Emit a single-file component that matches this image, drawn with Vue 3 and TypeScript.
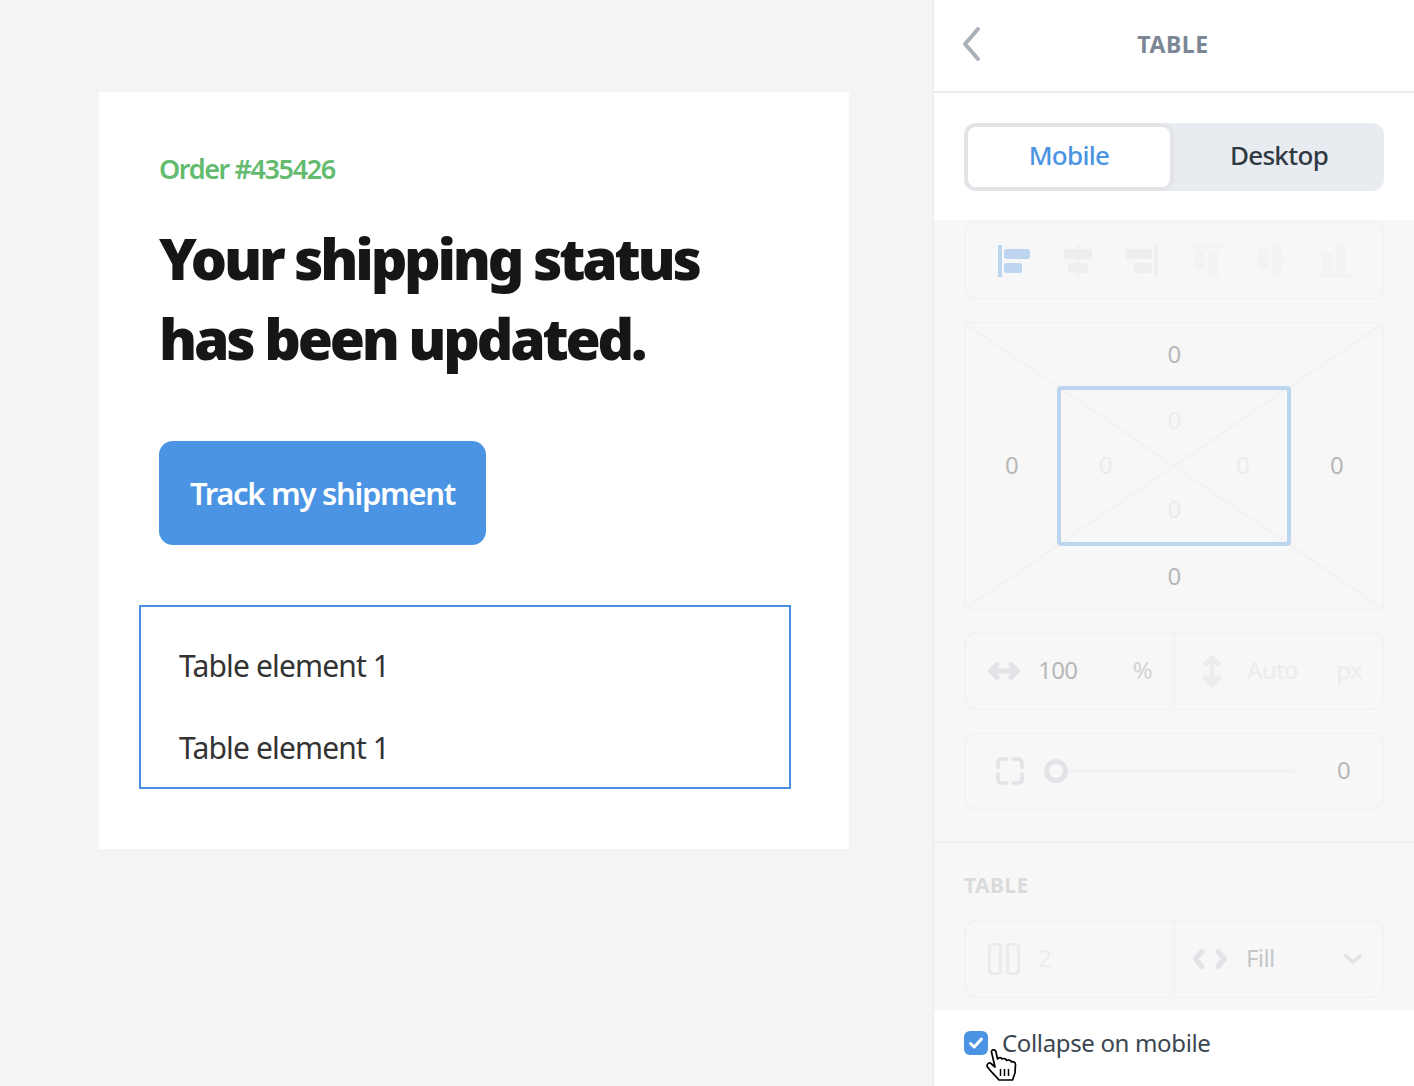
<script setup lang="ts">
const rowLabels: string[] = ['Table element 1', 'Table element 1']
</script>

<template>
  <div class="page">
    <main class="canvas">
      <section class="card">
        <div class="order">Order #435426</div>
        <h1 class="title">Your shipping status<br />has been updated.</h1>
        <a class="track">Track my shipment</a>
        <div class="table-sel">
          <div v-for="(r, i) in rowLabels" :key="i" class="tr">{{ r }}</div>
        </div>
      </section>
    </main>

    <aside class="panel">
      <header class="head">
        <svg class="back" width="20" height="36" viewBox="0 0 20 36"><path d="M16 3 L3 18 L16 33" fill="none" stroke="#aab1b9" stroke-width="4" stroke-linecap="round" stroke-linejoin="round" /></svg>
        <span class="head-title">TABLE</span>
      </header>

      <div class="tabs-wrap">
        <div class="tabs">
          <div class="tab active">Mobile</div>
          <div class="tab">Desktop</div>
        </div>
      </div>

      <div class="dim">
        <div class="box aligns">
          <svg width="32" height="32" viewBox="0 0 32 32" fill="#bdd5ee"><rect x="0" y="0" width="4" height="32" /><rect x="6" y="4" width="26" height="10" rx="2" /><rect x="6" y="18" width="18" height="10" rx="2" /></svg>
          <svg width="32" height="32" viewBox="0 0 32 32"><rect x="14" y="0" width="4" height="32" fill="#f3f3f4" /><rect x="2" y="4" width="28" height="10" rx="2" fill="#eeeeef" /><rect x="6" y="18" width="20" height="10" rx="2" fill="#eeeeef" /></svg>
          <svg width="32" height="32" viewBox="0 0 32 32" fill="#eeeeef"><rect x="28" y="0" width="4" height="32" /><rect x="0" y="4" width="26" height="10" rx="2" /><rect x="8" y="18" width="18" height="10" rx="2" /></svg>
          <svg width="32" height="32" viewBox="0 0 32 32" fill="#f2f3f3"><rect x="0" y="0" width="32" height="4" /><rect x="4" y="6" width="10" height="18" /><rect x="18" y="6" width="10" height="26" /></svg>
          <svg width="32" height="32" viewBox="0 0 32 32"><rect x="0" y="14" width="32" height="4" fill="#f4f5f5" /><rect x="4" y="4" width="10" height="20" fill="#f2f3f3" /><rect x="18" y="0" width="10" height="30" fill="#f2f3f3" /></svg>
          <svg width="32" height="32" viewBox="0 0 32 32" fill="#f2f3f3"><rect x="0" y="28" width="32" height="4" /><rect x="4" y="8" width="10" height="18" /><rect x="18" y="0" width="10" height="26" /></svg>
        </div>

        <div class="box spacing">
          <svg class="cross" width="416" height="284" viewBox="0 0 416 284"><path d="M0 0 L416 284 M416 0 L0 284" stroke="#f2f2f2" stroke-width="2" fill="none" /></svg>
          <span class="num top">0</span>
          <span class="num side">0</span>
          <div class="inner">
            <span class="faint in-top">0</span>
            <span class="faint in-left">0</span>
            <span class="faint in-right">0</span>
            <span class="faint in-bottom">0</span>
          </div>
          <span class="num side">0</span>
          <span class="num bottom">0</span>
        </div>

        <div class="box row">
          <div class="cell left">
            <svg width="32" height="20" viewBox="0 0 32 20"><path d="M2.5 10 H29.5 M9 3.5 L2.5 10 L9 16.5 M23 3.5 L29.5 10 L23 16.5" fill="none" stroke="#e3e4e7" stroke-width="5" stroke-linecap="round" stroke-linejoin="round" /></svg>
            <span class="val">100</span>
            <span class="unit">%</span>
          </div>
          <div class="cell right">
            <svg class="vert" width="20" height="32" viewBox="0 0 20 32"><path d="M10 2.5 V29.5 M3.5 9 L10 2.5 L16.5 9 M3.5 23 L10 29.5 L16.5 23" fill="none" stroke="#ebecee" stroke-width="5" stroke-linecap="round" stroke-linejoin="round" /></svg>
            <span class="val pale">Auto</span>
            <span class="unit pale">px</span>
          </div>
        </div>

        <div class="box row slider">
          <svg width="28" height="28" viewBox="0 0 28 28"><path d="M10.5 2 H6 Q2 2 2 6 V10.5 M17.5 2 H22 Q26 2 26 6 V10.5 M2 17.5 V22 Q2 26 6 26 H10.5 M26 17.5 V22 Q26 26 22 26 H17.5" fill="none" stroke="#e2e3e6" stroke-width="3.6" stroke-linecap="round" /></svg>
          <span class="knob"></span>
          <span class="track-line"></span>
          <span class="val end">0</span>
        </div>

        <div class="rule"></div>
        <div class="section">TABLE</div>

        <div class="box row">
          <div class="cell left">
            <svg width="32" height="32" viewBox="0 0 32 32"><rect x="1.5" y="1.5" width="11" height="29" rx="2" fill="none" stroke="#eaebed" stroke-width="3" /><rect x="19.5" y="1.5" width="11" height="29" rx="2" fill="none" stroke="#eaebed" stroke-width="3" /></svg>
            <span class="val pale">2</span>
          </div>
          <div class="cell right fill">
            <svg width="34" height="20" viewBox="0 0 34 20"><path d="M9 2.5 L2.5 10 L9 17.5 M25 2.5 L31.5 10 L25 17.5" fill="none" stroke="#e2e3e6" stroke-width="5" stroke-linecap="round" stroke-linejoin="round" /></svg>
            <span class="val mid">Fill</span>
            <svg class="caret" width="18" height="10" viewBox="0 0 18 10"><path d="M2 2 L9 8 L16 2" fill="none" stroke="#e2e3e6" stroke-width="3.6" stroke-linecap="round" stroke-linejoin="round" /></svg>
          </div>
        </div>
      </div>

      <footer class="foot">
        <span class="check">
          <svg width="16" height="14" viewBox="0 0 16 14"><path d="M2.5 7.5 L6.2 11 L13.5 3" fill="none" stroke="#fff" stroke-width="3" stroke-linecap="round" stroke-linejoin="round" /></svg>
        </span>
        <span class="foot-label">Collapse on mobile</span>
        <svg class="hand" width="31" height="33" viewBox="0 0 31 33">
          <path d="M5.5 3 C5 .5 9.5 0 10 3 L11.5 10 C13 8 15.5 8.5 16 10 C17.5 9 20 9.5 20.5 11.5 C22 10.5 25 11 25.5 13 C27 12 29.5 13 29.5 15.5 L29 24 L26.5 31 L13 31 C10 27 5 23 1.5 18 C0 15.5 3 13 5 14.5 L9 18 Z" fill="#fff" stroke="#000" stroke-width="1.7" stroke-linejoin="round" />
          <path d="M14.5 20 V27 M18.5 20 V27 M22.5 20 V27" stroke="#000" stroke-width="1.5" fill="none" />
        </svg>
      </footer>
    </aside>
  </div>
</template>

<style>
html, body { margin: 0; padding: 0; background: #f4f4f4; }
</style>

<style scoped>
.page {
  display: flex;
  width: 1414px;
  height: 1086px;
  overflow: hidden;
  font-family: "Noto Sans", "Open Sans", sans-serif;
  background: #f4f4f4;
}
.canvas { width: 933px; padding: 92px 0 0 99px; box-sizing: border-box; }
.card {
  width: 750px;
  height: 757px;
  background: #fff;
  padding: 60px 60px 0;
  box-sizing: border-box;
}
.order {
  color: #64bb6f;
  font-size: 27px;
  line-height: 34px;
  font-weight: 600;
  letter-spacing: -1.4px;
}
.title {
  margin: 32px 0 0;
  color: #161616;
  font-size: 57px;
  line-height: 80px;
  font-weight: 900;
  letter-spacing: -3.2px;
  white-space: nowrap;
}
.track {
  display: flex;
  align-items: center;
  justify-content: center;
  width: 327px;
  height: 104px;
  margin-top: 63px;
  border-radius: 14px;
  background: #4a94e3;
  color: #fff;
  font-size: 31px;
  font-weight: 600;
  letter-spacing: -1.3px;
}
.table-sel {
  width: 652px;
  height: 184px;
  margin: 60px 0 0 -20px;
  box-sizing: border-box;
  border: 2px solid #4a90e2;
  padding: 18px 38px;
}
.tr {
  height: 82px;
  line-height: 82px;
  font-size: 30px;
  color: #333;
  letter-spacing: -0.85px;
}

.panel {
  width: 481px;
  height: 1086px;
  display: flex;
  flex-direction: column;
  background: #fff;
  border-left: 1px solid #e8e8e8;
  box-sizing: border-box;
}
.head {
  position: relative;
  height: 93px;
  flex: none;
  box-sizing: border-box;
  border-bottom: 2px solid #e8ecf0;
  display: flex;
  align-items: center;
  justify-content: center;
}
.back { position: absolute; left: 28px; top: 26px; }
.head-title {
  color: #7b8794;
  font-size: 23px;
  font-weight: 700;
  letter-spacing: 0.6px;
  margin-left: -2px;
  padding-bottom: 4px;
}
.tabs-wrap { height: 127px; flex: none; box-sizing: border-box; padding: 30px 30px 0; }
.tabs {
  display: flex;
  height: 68px;
  background: #e8ebf0;
  border-radius: 12px;
}
.tab {
  width: 210px;
  display: flex;
  align-items: center;
  justify-content: center;
  font-size: 26px;
  font-weight: 500;
  color: #2f3a43;
  letter-spacing: -0.7px;
  box-sizing: border-box;
  padding-bottom: 4px;
}
.tab.active {
  background: #fff;
  color: #4a94e3;
  border: 4px solid #e2e4e8;
  border-radius: 12px;
}
.dim {
  height: 790px;
  flex: none;
  background: #f7f7f7;
  box-sizing: border-box;
  padding: 1px 30px 0;
  display: flex;
  flex-direction: column;
}
.box {
  width: 420px;
  box-sizing: border-box;
  border: 2px solid #f3f3f3;
  border-radius: 12px;
  flex: none;
}
.aligns {
  height: 79px;
  display: flex;
  gap: 32px;
  align-items: center;
  padding-left: 32px;
}
.spacing {
  position: relative;
  height: 288px;
  margin-top: 22px;
  display: grid;
  grid-template-columns: 91px 234px 91px;
  grid-template-rows: 62px 160px 62px;
  border-radius: 4px;
}
.cross { position: absolute; left: 0; top: 0; }
.num, .faint, .val, .unit {
  font-size: 24px;
  letter-spacing: -0.6px;
}
.num {
  position: relative;
  color: #b7b8b9;
  display: flex;
  align-items: center;
  justify-content: center;
  padding-bottom: 4px;
}
.top, .bottom { grid-column: 1 / -1; }
.inner {
  position: relative;
  box-sizing: border-box;
  border: 4px solid #bdd6ef;
  border-radius: 4px;
  display: grid;
  grid-template-columns: 89px 48px 89px;
  grid-template-rows: 61px 30px 61px;
}
.faint {
  color: #ebecec;
  display: flex;
  align-items: center;
  justify-content: center;
}
.in-top { grid-column: 2; grid-row: 1; padding-bottom: 2px; }
.in-left { grid-column: 1; grid-row: 2; padding-bottom: 3px; }
.in-right { grid-column: 3; grid-row: 2; padding-bottom: 3px; }
.in-bottom { grid-column: 2; grid-row: 3; padding-bottom: 6px; }
.row {
  height: 78px;
  display: flex;
  margin-top: 22px;
}
.cell { display: flex; align-items: center; height: 100%; box-sizing: border-box; }
.left { width: 207px; padding-left: 22px; }
.right { flex: 1; border-left: 2px solid #f2f2f2; padding-left: 27px; }
.val { color: #b7b8b9; margin-left: 18px; padding-bottom: 4px; }
.unit { color: #d2d3d5; margin-left: auto; margin-right: 21px; padding-bottom: 4px; }
.right .val { margin-left: 25px; }
.pale { color: #ebecec; }
.mid { color: #c6c7c9; }
.right .unit { margin-right: 20px; color: #ebecec; }
.slider { align-items: center; padding-left: 30px; position: relative; }
.knob {
  width: 24px;
  height: 24px;
  box-sizing: border-box;
  border: 5px solid #e2e3e6;
  border-radius: 50%;
  margin-left: 20px;
  flex: none;
}
.track-line {
  width: 227px;
  height: 4px;
  background: #f1f2f3;
  flex: none;
}
.end { margin-left: 42px; }
.right.fill { padding-left: 18px; }
.right.fill .val { margin-left: 19px; }
.caret { margin-left: auto; margin-right: 20px; }
.rule {
  height: 2px;
  background: #f1f1f1;
  margin: 31px -30px 0;
  flex: none;
}
.section {
  margin-top: 29px;
  color: #d9dbdd;
  font-size: 21px;
  line-height: 26px;
  font-weight: 700;
  letter-spacing: 0.4px;
}
.section + .row { margin-top: 22px; }
.foot {
  position: relative;
  flex: 1;
  display: flex;
  align-items: flex-start;
  padding: 21px 30px 0;
  background: #fff;
}
.check {
  width: 24px;
  height: 24px;
  border-radius: 6px;
  background: #4a94e3;
  display: flex;
  align-items: center;
  justify-content: center;
  flex: none;
}
.foot-label {
  margin-left: 14px;
  color: #3a4651;
  font-size: 24px;
  line-height: 24px;
  letter-spacing: -0.35px;
}
.hand { position: absolute; left: 52px; top: 39px; }
</style>
